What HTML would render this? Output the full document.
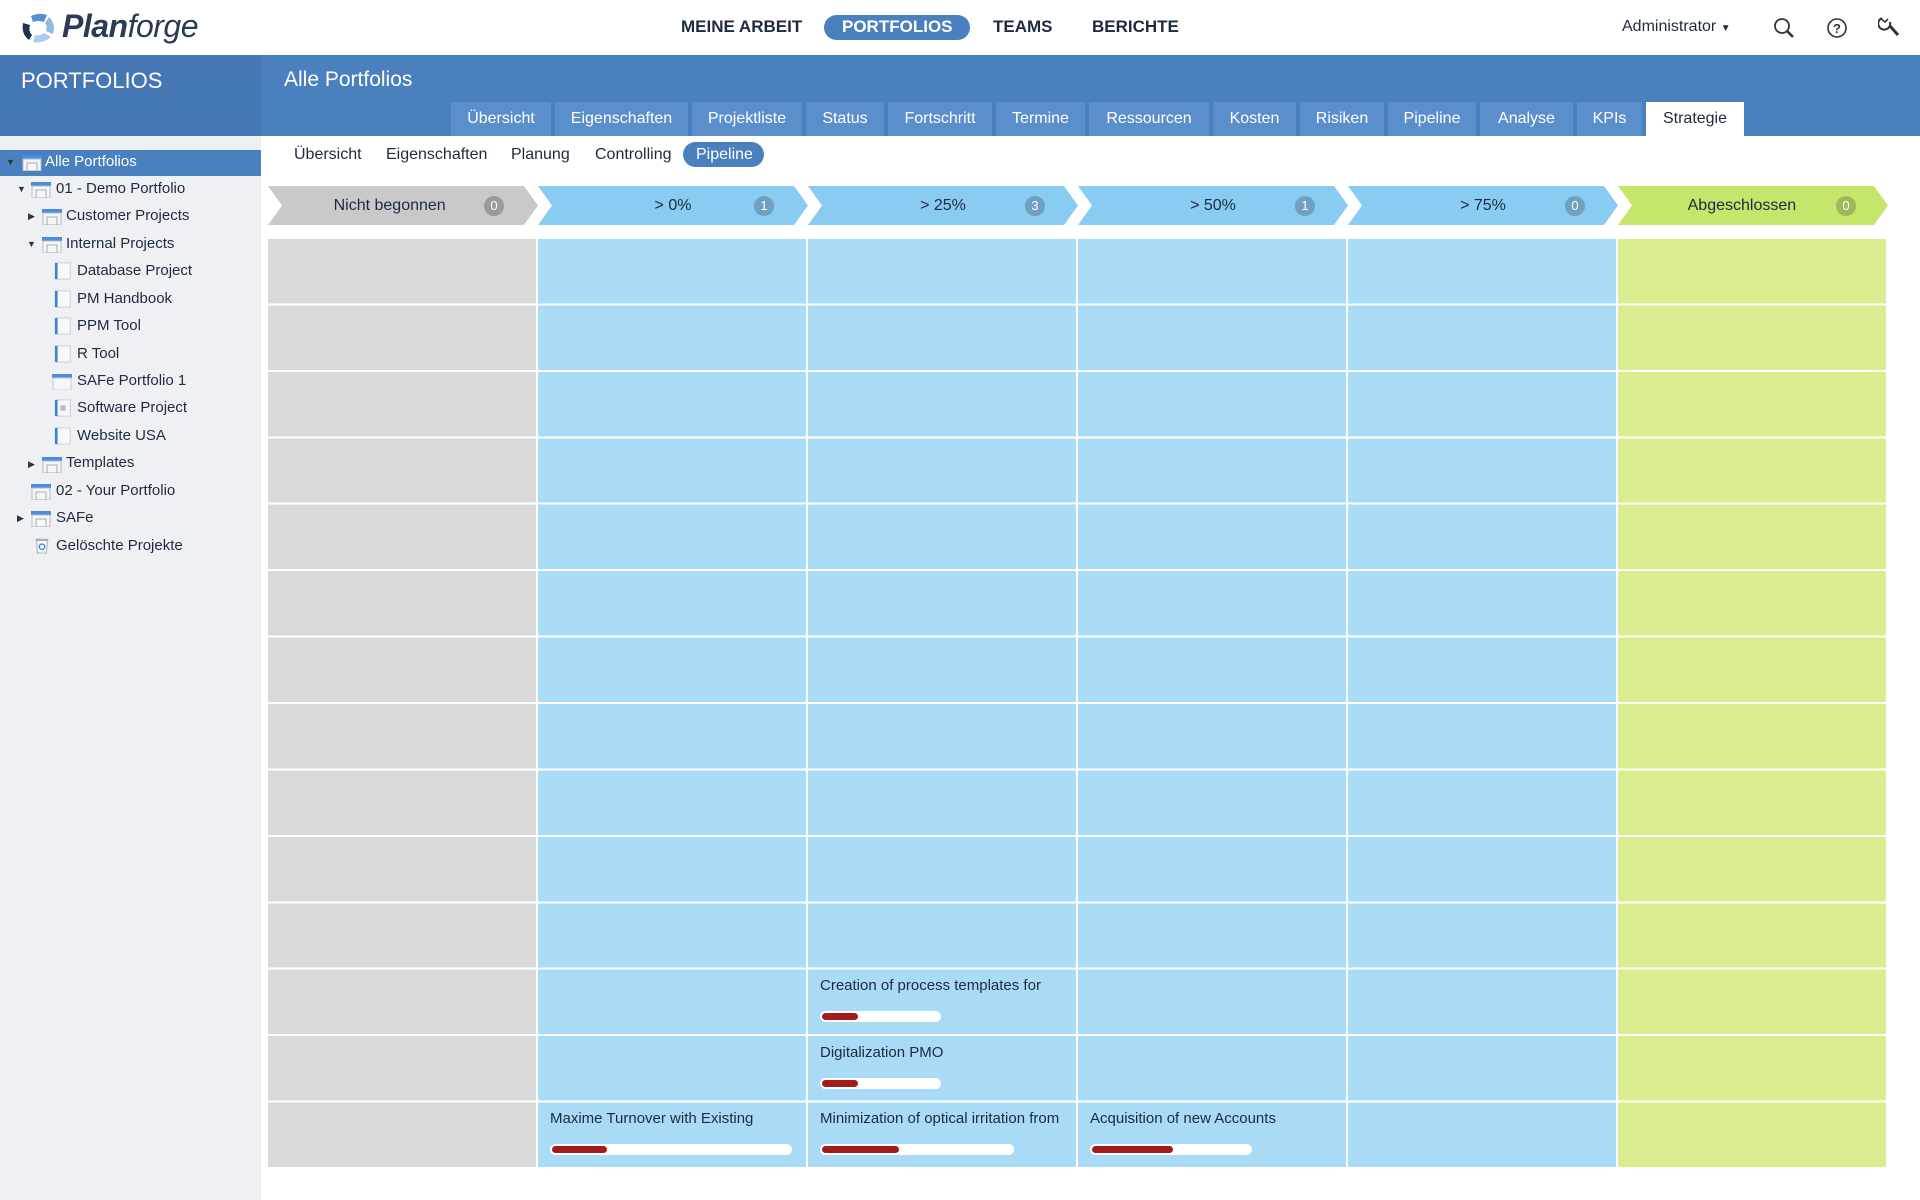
<!DOCTYPE html>
<html><head><meta charset="utf-8"><style>
*{box-sizing:border-box;margin:0;padding:0}
body{width:1920px;height:1200px;position:relative;background:#fff;font-family:"Liberation Sans",Arial,sans-serif;overflow:hidden;color:#1d2a40}
.a{position:absolute}
.nav{font-weight:bold;font-size:17px;top:17px;color:#1e2a3f}
.tab{position:absolute;top:102px;height:34px;background:#5b8fcc;color:#fff;font-size:16px;text-align:center;line-height:34px}
.sub{position:absolute;top:145px;font-size:16px;color:#1d2a40;line-height:20px}
.tree{position:absolute;font-size:15px;line-height:20px;color:#1d2a40}
.ic{position:absolute;width:20px;height:18px}
.arr{position:absolute;font-size:9px;color:#333}
.hd{position:absolute;top:186px;height:39px;width:270px;clip-path:polygon(0 0,calc(100% - 14px) 0,100% 50%,calc(100% - 14px) 100%,0 100%,14px 50%);font-size:16px;line-height:39px;text-align:center}
.bd{position:absolute;top:214px;width:20px;height:20px;border-radius:50%;color:#fff;font-size:13px;line-height:20px;text-align:center;margin-top:-18px}
.col{position:absolute;top:239px;height:930px;width:268px}
.card{position:absolute;font-size:15px;color:#1d2a40;white-space:nowrap;overflow:hidden;height:19px;line-height:19px}
.bar{position:absolute;height:11px;background:#fff;border-radius:6px}
.bar i{position:absolute;left:2px;top:2px;height:7px;background:#a31c1c;border-radius:4px}
</style></head><body>
<!-- top bar -->
<svg class="a" style="left:19px;top:12px" width="38" height="32" viewBox="0 0 38 32">
<path d="M12 4 Q20 0 28 3 L25 10 Q19 8 14 10Z" fill="#5a8fcf"/>
<path d="M30 5 Q37 12 34 22 L27 19 Q29 14 26 11Z" fill="#8fb8e3"/>
<path d="M32 25 Q24 32 14 30 L16 23 Q22 24 25 21Z" fill="#a9cdee"/>
<path d="M10 28 Q2 22 4 11 L11 13 Q9 19 13 23Z" fill="#213350"/>
</svg>
<div class="a" style="left:62px;top:8px;font-size:32px;font-style:italic;color:#2b3a55;letter-spacing:-0.5px"><b>Plan</b>forge</div>
<div class="a nav" style="left:681px">MEINE ARBEIT</div>
<div class="a" style="left:824px;top:15px;width:146px;height:25px;background:#4a80bd;border-radius:13px"></div>
<div class="a nav" style="left:842px;color:#fff">PORTFOLIOS</div>
<div class="a nav" style="left:993px">TEAMS</div>
<div class="a nav" style="left:1092px">BERICHTE</div>
<div class="a" style="left:1622px;top:18px;font-size:16px;color:#1e2a3f">Administrator <span style="font-size:10px">▼</span></div>
<svg class="a" style="left:1772px;top:16px" width="24" height="24" viewBox="0 0 24 24" fill="none" stroke="#333" stroke-width="1.8"><circle cx="10" cy="10" r="7"/><path d="M15 15l6 6" stroke-width="2.6"/></svg>
<svg class="a" style="left:1825px;top:16px" width="24" height="24" viewBox="0 0 24 24" fill="none" stroke="#333" stroke-width="1.6"><circle cx="12" cy="12" r="9"/><text x="12" y="17" font-size="13" text-anchor="middle" fill="#333" stroke="none" font-family="Liberation Sans" font-weight="bold">?</text></svg>
<svg class="a" style="left:1878px;top:14px" width="24" height="26" viewBox="0 0 24 26" fill="none" stroke="#333" stroke-width="2"><path d="M4 4a6 6 0 1 0 8 4" /><path d="M3 5l4 3 3-3" stroke-width="1.6"/><path d="M12 12l8 9" stroke-width="3"/></svg>
<!-- blue header -->
<div class="a" style="left:0;top:55px;width:261px;height:81px;background:#4577b5"></div>
<div class="a" style="left:261px;top:55px;width:1659px;height:81px;background:#4a80bd"></div>
<div class="a" style="left:21px;top:68px;color:#fff;font-size:22px">PORTFOLIOS</div>
<div class="a" style="left:284px;top:68px;color:#fff;font-size:21px">Alle Portfolios</div>
<div class="tab" style="left:451px;width:100px">Übersicht</div>
<div class="tab" style="left:555px;width:133px">Eigenschaften</div>
<div class="tab" style="left:692px;width:110px">Projektliste</div>
<div class="tab" style="left:806px;width:78px">Status</div>
<div class="tab" style="left:888px;width:104px">Fortschritt</div>
<div class="tab" style="left:996px;width:89px">Termine</div>
<div class="tab" style="left:1089px;width:120px">Ressourcen</div>
<div class="tab" style="left:1213px;width:83px">Kosten</div>
<div class="tab" style="left:1300px;width:84px">Risiken</div>
<div class="tab" style="left:1388px;width:88px">Pipeline</div>
<div class="tab" style="left:1480px;width:93px">Analyse</div>
<div class="tab" style="left:1577px;width:65px">KPIs</div>
<div class="tab" style="left:1646px;width:98px;background:#fff;color:#1d2a40">Strategie</div>
<!-- sidebar -->
<div class="a" style="left:0;top:136px;width:261px;height:1064px;background:#eef0f3"></div>
<div class="a" style="left:0;top:150px;width:261px;height:26px;background:#4a80bd"></div>
<!-- tree rows -->
<div class="arr" style="left:6px;top:157px">▼</div><svg class="ic" style="left:22px;top:153px" viewBox="0 0 20 18"><rect x="0" y="2" width="20" height="4" fill="#4a8de0"/><rect x="1" y="6" width="18" height="12" fill="#f4f6f9" stroke="#bbb" stroke-width="1"/><rect x="5" y="10" width="10" height="8" fill="none" stroke="#aaa"/></svg><div class="tree" style="left:45px;top:152px;color:#fff">Alle Portfolios</div>
<div class="arr" style="left:17px;top:184px">▼</div><svg class="ic" style="left:31px;top:180px" viewBox="0 0 20 18"><rect x="0" y="2" width="20" height="4" fill="#4a8de0"/><rect x="1" y="6" width="18" height="12" fill="#f4f6f9" stroke="#bbb"/><rect x="5" y="10" width="10" height="8" fill="none" stroke="#aaa"/></svg><div class="tree" style="left:56px;top:179px">01 - Demo Portfolio</div>
<div class="arr" style="left:28px;top:211px">▶</div><svg class="ic" style="left:42px;top:207px" viewBox="0 0 20 18"><rect x="0" y="2" width="20" height="4" fill="#4a8de0"/><rect x="1" y="6" width="18" height="12" fill="#f4f6f9" stroke="#bbb"/><rect x="5" y="10" width="10" height="8" fill="none" stroke="#aaa"/></svg><div class="tree" style="left:66px;top:206px">Customer Projects</div>
<div class="arr" style="left:27px;top:239px">▼</div><svg class="ic" style="left:42px;top:235px" viewBox="0 0 20 18"><rect x="0" y="2" width="20" height="4" fill="#4a8de0"/><rect x="1" y="6" width="18" height="12" fill="#f4f6f9" stroke="#bbb"/><rect x="5" y="10" width="10" height="8" fill="none" stroke="#aaa"/></svg><div class="tree" style="left:66px;top:234px">Internal Projects</div>
<svg class="ic" style="left:53px;top:262px" viewBox="0 0 20 20"><rect x="2" y="1" width="16" height="18" fill="#f7f8fa" stroke="#ccc"/><rect x="1" y="1" width="3" height="18" fill="#3f82d8"/></svg><div class="tree" style="left:77px;top:261px">Database Project</div>
<svg class="ic" style="left:53px;top:290px" viewBox="0 0 20 20"><rect x="2" y="1" width="16" height="18" fill="#f7f8fa" stroke="#ccc"/><rect x="1" y="1" width="3" height="18" fill="#3f82d8"/></svg><div class="tree" style="left:77px;top:289px">PM Handbook</div>
<svg class="ic" style="left:53px;top:317px" viewBox="0 0 20 20"><rect x="2" y="1" width="16" height="18" fill="#f7f8fa" stroke="#ccc"/><rect x="1" y="1" width="3" height="18" fill="#3f82d8"/></svg><div class="tree" style="left:77px;top:316px">PPM Tool</div>
<svg class="ic" style="left:53px;top:345px" viewBox="0 0 20 20"><rect x="2" y="1" width="16" height="18" fill="#f7f8fa" stroke="#ccc"/><rect x="1" y="1" width="3" height="18" fill="#3f82d8"/></svg><div class="tree" style="left:77px;top:344px">R Tool</div>
<svg class="ic" style="left:52px;top:372px" viewBox="0 0 20 18"><rect x="0" y="2" width="20" height="4" fill="#4a8de0"/><rect x="1" y="6" width="18" height="12" fill="#f4f6f9" stroke="#ccc"/></svg><div class="tree" style="left:77px;top:371px">SAFe Portfolio 1</div>
<svg class="ic" style="left:53px;top:399px" viewBox="0 0 20 20"><rect x="2" y="1" width="16" height="18" fill="#f7f8fa" stroke="#ccc"/><rect x="1" y="1" width="3" height="18" fill="#3f82d8"/><rect x="7" y="7" width="6" height="6" fill="#bbb"/></svg><div class="tree" style="left:77px;top:398px">Software Project</div>
<svg class="ic" style="left:53px;top:427px" viewBox="0 0 20 20"><rect x="2" y="1" width="16" height="18" fill="#f7f8fa" stroke="#ccc"/><rect x="1" y="1" width="3" height="18" fill="#3f82d8"/></svg><div class="tree" style="left:77px;top:426px">Website USA</div>
<div class="arr" style="left:28px;top:459px">▶</div><svg class="ic" style="left:42px;top:455px" viewBox="0 0 20 18"><rect x="0" y="2" width="20" height="4" fill="#4a8de0"/><rect x="1" y="6" width="18" height="12" fill="#f4f6f9" stroke="#bbb"/><rect x="5" y="10" width="10" height="8" fill="none" stroke="#aaa"/></svg><div class="tree" style="left:66px;top:453px">Templates</div>
<svg class="ic" style="left:31px;top:482px" viewBox="0 0 20 18"><rect x="0" y="2" width="20" height="4" fill="#4a8de0"/><rect x="1" y="6" width="18" height="12" fill="#f4f6f9" stroke="#bbb"/><rect x="5" y="10" width="10" height="8" fill="none" stroke="#aaa"/></svg><div class="tree" style="left:56px;top:481px">02 - Your Portfolio</div>
<div class="arr" style="left:17px;top:513px">▶</div><svg class="ic" style="left:31px;top:509px" viewBox="0 0 20 18"><rect x="0" y="2" width="20" height="4" fill="#4a8de0"/><rect x="1" y="6" width="18" height="12" fill="#f4f6f9" stroke="#bbb"/><rect x="5" y="10" width="10" height="8" fill="none" stroke="#aaa"/></svg><div class="tree" style="left:56px;top:508px">SAFe</div>
<svg class="ic" style="left:32px;top:536px" viewBox="0 0 20 20"><rect x="3" y="3" width="14" height="2" fill="#9bb"/><path d="M4 5h12l-1 14H5z" fill="#f4f6f9" stroke="#aaa"/><circle cx="10" cy="12" r="3" fill="none" stroke="#3f82d8" stroke-width="1.5"/></svg><div class="tree" style="left:56px;top:536px">Gelöschte Projekte</div>
<!-- subtabs -->
<div class="sub" style="left:294px">Übersicht</div>
<div class="sub" style="left:386px">Eigenschaften</div>
<div class="sub" style="left:511px">Planung</div>
<div class="sub" style="left:595px">Controlling</div>
<div class="a" style="left:683px;top:142px;width:81px;height:25px;background:#4a80bd;border-radius:13px"></div>
<div class="sub" style="left:696px;color:#fff">Pipeline</div>
<!-- headers -->
<div class="hd" style="left:268px;background:#c9c9c9">Nicht begonnen &nbsp;&nbsp;&nbsp;&nbsp;&nbsp;</div><div class="bd" style="left:484px;background:#9a9a9a">0</div>
<div class="hd" style="left:538px;background:#89cbf1">&gt; 0%</div><div class="bd" style="left:754px;background:#6fa0c0">1</div>
<div class="hd" style="left:808px;background:#89cbf1">&gt; 25%</div><div class="bd" style="left:1025px;background:#6fa0c0">3</div>
<div class="hd" style="left:1078px;background:#89cbf1">&gt; 50%</div><div class="bd" style="left:1295px;background:#6fa0c0">1</div>
<div class="hd" style="left:1348px;background:#89cbf1">&gt; 75%</div><div class="bd" style="left:1565px;background:#6fa0c0">0</div>
<div class="hd" style="left:1618px;background:#c5e56b">Abgeschlossen &nbsp;&nbsp;&nbsp;&nbsp;</div><div class="bd" style="left:1836px;background:#9fb85a">0</div>
<!-- columns -->
<div class="col" style="left:268px;background:repeating-linear-gradient(#d9d9d9 0 64.4px,#fff 64.4px 66.43px)"></div>
<div class="col" style="left:538px;background:repeating-linear-gradient(#a9dbf6 0 64.4px,#fff 64.4px 66.43px)"></div>
<div class="col" style="left:808px;background:repeating-linear-gradient(#a9dbf6 0 64.4px,#fff 64.4px 66.43px)"></div>
<div class="col" style="left:1078px;background:repeating-linear-gradient(#a9dbf6 0 64.4px,#fff 64.4px 66.43px)"></div>
<div class="col" style="left:1348px;background:repeating-linear-gradient(#a9dbf6 0 64.4px,#fff 64.4px 66.43px)"></div>
<div class="col" style="left:1618px;background:repeating-linear-gradient(#d8ed8f 0 64.4px,#fff 64.4px 66.43px)"></div>
<div class="a" style="left:268px;top:1167px;width:1620px;height:3px;background:#fff"></div>
<!-- cards -->
<div class="card" style="left:820px;top:976px;width:255px">Creation of process templates for</div>
<div class="bar" style="left:820px;top:1011px;width:121px"><i style="width:36px"></i></div>
<div class="card" style="left:820px;top:1043px;width:255px">Digitalization PMO</div>
<div class="bar" style="left:820px;top:1078px;width:121px"><i style="width:36px"></i></div>
<div class="card" style="left:550px;top:1109px;width:255px">Maxime Turnover with Existing</div>
<div class="bar" style="left:550px;top:1144px;width:242px"><i style="width:55px"></i></div>
<div class="card" style="left:820px;top:1109px;width:255px">Minimization of optical irritation from</div>
<div class="bar" style="left:820px;top:1144px;width:194px"><i style="width:77px"></i></div>
<div class="card" style="left:1090px;top:1109px;width:255px">Acquisition of new Accounts</div>
<div class="bar" style="left:1090px;top:1144px;width:162px"><i style="width:81px"></i></div>
</body></html>
